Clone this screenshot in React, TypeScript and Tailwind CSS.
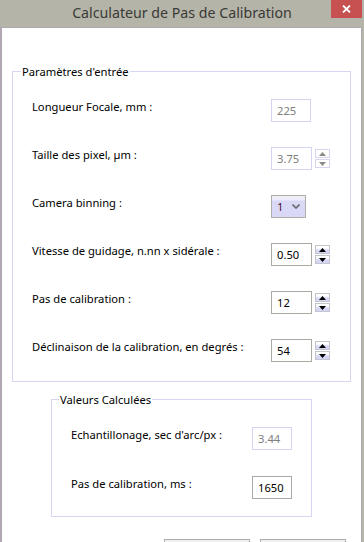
import clsx from "clsx";

const font = { fontFamily: '"Noto Sans", "Open Sans", sans-serif' };

function Field({ value, disabled, w = "w-[41px]" }: { value: string; disabled?: boolean; w?: string }) {
  return (
    <div
      className={clsx(
        "h-[23px] shrink-0 border bg-white pl-[5px] text-[11.2px] leading-[21px]",
        w,
        disabled ? "border-[#d3d3f2] text-[#7d7d7d]" : "border-[#aaaaa2] text-black"
      )}
    >
      {value}
    </div>
  );
}

function Arrow({ up, color }: { up?: boolean; color: string }) {
  return (
    <svg width="7" height="4" viewBox="0 0 7 4">
      {up ? <path d="M0 4 L3.5 0 L7 4 Z" fill={color} /> : <path d="M0 0 L7 0 L3.5 4 Z" fill={color} />}
    </svg>
  );
}

function Spinner({ disabled }: { disabled?: boolean }) {
  const btn = clsx(
    "flex h-[9px] w-[15px] items-center justify-center border",
    disabled ? "border-[#d6d6f0] bg-white" : "border-[#c4c4cc] bg-gradient-to-b from-white from-30% to-[#d6d6f6] to-60%"
  );
  const c = disabled ? "#8a8a84" : "#000000";
  return (
    <div className="ml-[3px] mt-[2px] flex flex-col gap-[1px]">
      <div className={btn}>
        <Arrow up color={c} />
      </div>
      <div className={btn}>
        <Arrow color={c} />
      </div>
    </div>
  );
}

function Row({ label, labelW, children }: { label: string; labelW: string; children: React.ReactNode }) {
  return (
    <div className="flex h-[23px] items-start">
      <div className={clsx("shrink-0 text-[11.2px] leading-[16px] text-black", labelW)}>{label}</div>
      {children}
    </div>
  );
}

export default function App() {
  return (
    <div className="relative h-[542px] w-[364px] overflow-hidden bg-[#b5b4a8]" style={font}>
      {/* title bar */}
      <div className="flex h-[27px] items-center justify-center pb-[1px] text-[14.2px] text-[#3a3a36]">
        Calculateur de Pas de Calibration
      </div>
      <div className="absolute right-[2px] top-0 flex h-[18px] w-[31px] items-center justify-center bg-[#c75050]">
        <svg width="9" height="8" viewBox="0 0 9 8">
          <path d="M1 0.5 L8 7.5 M8 0.5 L1 7.5" stroke="white" strokeWidth="1.8" />
        </svg>
      </div>

      {/* client area */}
      <div className="mr-[2px] h-[515px] border-l-2 border-r border-t border-[#b3a6b3] bg-white">
        <div className="relative ml-[10px] mt-[43px] h-[311px] w-[339px] border border-[#d6d6f2]">
          <div className="absolute -top-[8px] left-[8px] bg-white px-[1px] text-[11.2px] leading-[16px] text-black">
            Paramètres d'entrée
          </div>
          <div className="flex flex-col gap-[25px] pl-[19px] pt-[27px]">
            <Row label="Longueur Focale, mm :" labelW="w-[239px]">
              <Field value="225" disabled w="w-[40px]" />
            </Row>
            <Row label="Taille des pixel, µm :" labelW="w-[239px]">
              <Field value="3.75" disabled />
              <Spinner disabled />
            </Row>
            <Row label="Camera binning :" labelW="w-[239px]">
              <div className="flex h-[23px] w-[35px] items-center justify-between border border-[#aeaea6] bg-gradient-to-b from-[#eeeefb] from-15% to-[#d9d9f7] to-25% pl-[5px] pr-[5px]">
                <span className="text-[11.2px] leading-[16px] text-[#4a1030]">1</span>
                <svg width="8" height="5" viewBox="0 0 8 5">
                  <path d="M0.5 0.5 L4 4 L7.5 0.5" fill="none" stroke="#6a6a6a" strokeWidth="1.6" />
                </svg>
              </div>
            </Row>
            <Row label="Vitesse de guidage, n.nn x sidérale :" labelW="w-[239px]">
              <Field value="0.50" />
              <Spinner />
            </Row>
            <Row label="Pas de calibration :" labelW="w-[239px]">
              <Field value="12" />
              <Spinner />
            </Row>
            <Row label="Déclinaison de la calibration, en degrés :" labelW="w-[239px]">
              <Field value="54" />
              <Spinner />
            </Row>
          </div>
        </div>

        <div className="relative ml-[49px] mt-[17px] h-[118px] w-[261px] border border-[#d6d6f2]">
          <div className="absolute -top-[8px] left-[7px] bg-white px-[1px] text-[11.2px] leading-[16px] text-black">
            Valeurs Calculées
          </div>
          <div className="flex flex-col gap-[26px] pl-[19px] pt-[27px]">
            <Row label="Echantillonage, sec d'arc/px :" labelW="w-[181px]">
              <Field value="3.44" disabled w="w-[40px]" />
            </Row>
            <Row label="Pas de calibration, ms :" labelW="w-[181px]">
              <Field value="1650" w="w-[40px]" />
            </Row>
          </div>
        </div>

        <div className="ml-[162px] mt-[22px] flex gap-[10px]">
          <div className="h-[23px] w-[86px] border border-[#acaca4] bg-[#f0f0f0]" />
          <div className="h-[23px] w-[86px] border border-[#acaca4] bg-[#f0f0f0]" />
        </div>
      </div>
    </div>
  );
}
